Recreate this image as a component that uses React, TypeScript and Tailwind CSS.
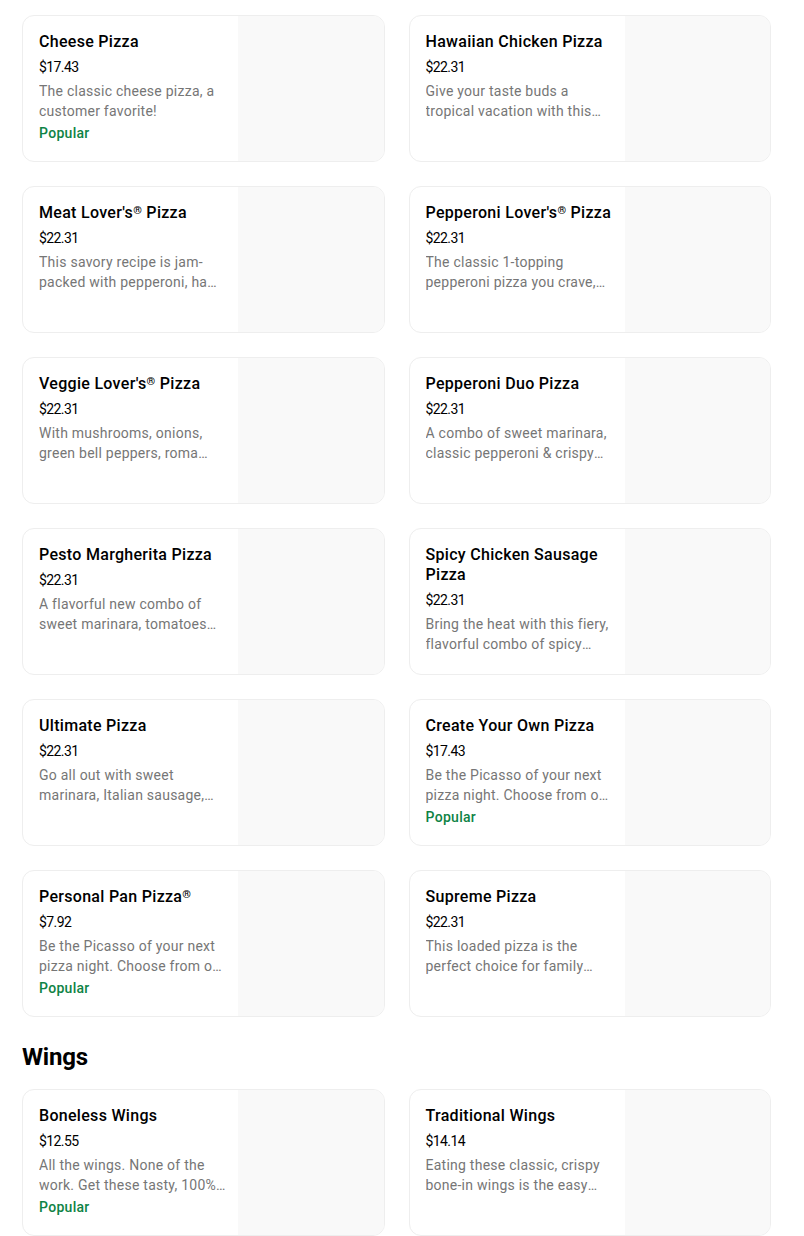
import React from "react";

type Item = { name: string; price: string; desc: string; popular?: boolean };

const pizzas: Item[] = [
  { name: "Cheese Pizza", price: "$17.43", desc: "The classic cheese pizza, a customer favorite!", popular: true },
  { name: "Hawaiian Chicken Pizza", price: "$22.31", desc: "Give your taste buds a tropical vacation with this pizza loaded with grilled chicken, pineapple and more." },
  { name: "Meat Lover's® Pizza", price: "$22.31", desc: "This savory recipe is jam-packed with pepperoni, ham, beef, pork sausage and bacon." },
  { name: "Pepperoni Lover's® Pizza", price: "$22.31", desc: "The classic 1-topping pepperoni pizza you crave, with extra pepperoni." },
  { name: "Veggie Lover's® Pizza", price: "$22.31", desc: "With mushrooms, onions, green bell peppers, roma tomatoes and black olives." },
  { name: "Pepperoni Duo Pizza", price: "$22.31", desc: "A combo of sweet marinara, classic pepperoni & crispy cupped pepperoni." },
  { name: "Pesto Margherita Pizza", price: "$22.31", desc: "A flavorful new combo of sweet marinara, tomatoes and basil pesto drizzle." },
  { name: "Spicy Chicken Sausage Pizza", price: "$22.31", desc: "Bring the heat with this fiery, flavorful combo of spicy chicken sausage." },
  { name: "Ultimate Pizza", price: "$22.31", desc: "Go all out with sweet marinara, Italian sausage, pepperoni and more." },
  { name: "Create Your Own Pizza", price: "$17.43", desc: "Be the Picasso of your next pizza night. Choose from our crusts, sauces and toppings.", popular: true },
  { name: "Personal Pan Pizza®", price: "$7.92", desc: "Be the Picasso of your next pizza night. Choose from our toppings.", popular: true },
  { name: "Supreme Pizza", price: "$22.31", desc: "This loaded pizza is the perfect choice for family night." },
];

const wings: Item[] = [
  { name: "Boneless Wings", price: "$12.55", desc: "All the wings. None of the work. Get these tasty, 100% white meat wings.", popular: true },
  { name: "Traditional Wings", price: "$14.14", desc: "Eating these classic, crispy bone-in wings is the easy choice." },
];

function Name({ text }: { text: string }) {
  const parts = text.split("®");
  return (
    <>
      {parts.map((p, i) => (
        <React.Fragment key={i}>
          {p}
          {i < parts.length - 1 && (
            <span className="relative -top-[4px] text-[11px] leading-none">®</span>
          )}
        </React.Fragment>
      ))}
    </>
  );
}

function Card({ item }: { item: Item }) {
  return (
    <div className="flex h-[147px] overflow-hidden rounded-xl border border-[#eeeeee] bg-white">
      <div className="flex w-[215px] shrink-0 flex-col pl-4 pr-3 pt-4">
        <div className="h-auto text-[16px] font-medium leading-5 tracking-[0.3px] text-black">
          <Name text={item.name} />
        </div>
        <div className="mt-[5px] text-[14px] leading-5 tracking-[-0.6px] text-black">{item.price}</div>
        <div className="mt-1 line-clamp-2 text-[14px] leading-5 tracking-[0.25px] text-[#767676]">{item.desc}</div>
        {item.popular && (
          <div className="mt-[2px] text-[14px] font-medium leading-5 tracking-[0.3px] text-[#0e8345]">Popular</div>
        )}
      </div>
      <div className="flex-1 bg-[#f9f9f9]" />
    </div>
  );
}

export default function App() {
  return (
    <div
      className="min-h-[1236px] bg-white pl-[22px] pr-[33px] pt-[15px]"
      style={{ fontFamily: "Roboto, 'Liberation Sans', sans-serif" }}
    >
      <div className="grid grid-cols-2 gap-x-6 gap-y-6">
        {pizzas.map((p) => (
          <Card key={p.name} item={p} />
        ))}
      </div>
      <h2 className="mb-4 mt-6 text-[24px] font-bold leading-8 tracking-[-0.2px] text-black">Wings</h2>
      <div className="grid grid-cols-2 gap-x-6 gap-y-6">
        {wings.map((p) => (
          <Card key={p.name} item={p} />
        ))}
      </div>
    </div>
  );
}
